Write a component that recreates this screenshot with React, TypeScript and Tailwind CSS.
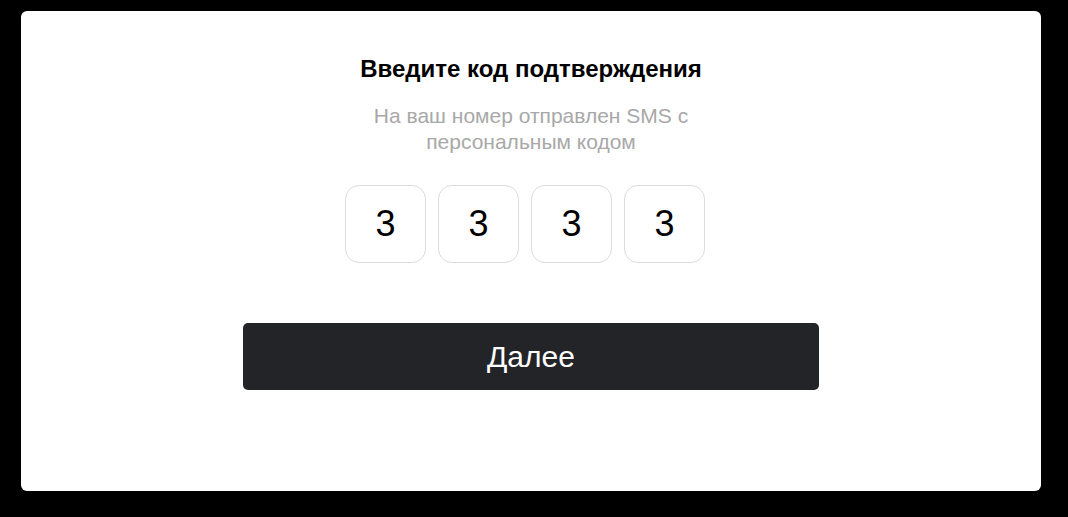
export default function App() {
  const digits = ["3", "3", "3", "3"];
  return (
    <div className="w-[1068px] h-[517px] bg-black pt-[11px] pl-[21px]" style={{ fontFamily: '"Liberation Sans", Arial, sans-serif' }}>
      <div className="w-[1020px] h-[480px] bg-white rounded-[6px] flex flex-col items-center">
        <h1 className="mt-[44px] text-[24px] leading-[28px] font-bold text-black">Введите код подтверждения</h1>
        <p className="mt-[20px] w-[330px] text-center text-[21px] leading-[26px] text-[#a8a8a8]">
          На ваш номер отправлен SMS с персональным кодом
        </p>
        <div className="mt-[30px] mr-[12px] flex gap-[12px]">
          {digits.map((d, i) => (
            <div key={i} className="w-[81px] h-[78px] rounded-[14px] border border-[#dcdcdc] flex items-center justify-center text-[36px] text-black">
              {d}
            </div>
          ))}
        </div>
        <button className="mt-[60px] w-[576px] h-[67px] rounded-[5px] bg-[#232428] text-white text-[30px]">
          Далее
        </button>
      </div>
    </div>
  );
}
